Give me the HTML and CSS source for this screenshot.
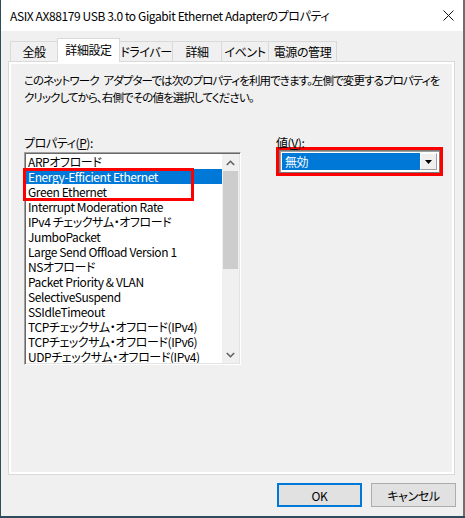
FILE: index.html
```
<!DOCTYPE html>
<html lang="ja">
<head>
<meta charset="utf-8">
<link rel="stylesheet" href="styles.css">
</head>
<body>
<div class="window">
  <div class="titlebar">
    <span class="title">ASIX AX88179 USB 3.0 to Gigabit Ethernet Adapterのプロパティ</span>
    <span class="close"><svg width="11" height="11" viewBox="0 0 11 11"><path d="M0.5 0.5 L10.5 10.5 M10.5 0.5 L0.5 10.5" stroke="#111" stroke-width="1"/></svg></span>
  </div>
  <div class="tabs">
    <div class="tab t1">全般</div>
    <div class="tab t2 selected">詳細設定</div>
    <div class="tab t3">ドライバー</div>
    <div class="tab t4">詳細</div>
    <div class="tab t5">イベント</div>
    <div class="tab t6">電源の管理</div>
  </div>
  <div class="panel">
    <p class="desc">このネットワーク アダプターでは次のプロパティを利用できます。左側で変更するプロパティを<br>クリックしてから、右側でその値を選択してください。</p>
    <div class="cols">
      <div class="leftcol">
        <div class="label">プロパティ(<u>P</u>):</div>
        <div class="listbox">
          <div class="items">
            <div class="item">ARPオフロード</div>
            <div class="item sel">Energy-Efficient Ethernet</div>
            <div class="item">Green Ethernet</div>
            <div class="item">Interrupt Moderation Rate</div>
            <div class="item">IPv4 チェックサム・オフロード</div>
            <div class="item">JumboPacket</div>
            <div class="item">Large Send Offload Version 1</div>
            <div class="item">NSオフロード</div>
            <div class="item">Packet Priority &amp; VLAN</div>
            <div class="item">SelectiveSuspend</div>
            <div class="item">SSIdleTimeout</div>
            <div class="item">TCPチェックサム・オフロード(IPv4)</div>
            <div class="item">TCPチェックサム・オフロード(IPv6)</div>
            <div class="item">UDPチェックサム・オフロード(IPv4)</div>
          </div>
          <div class="scrollbar">
            <div class="sbtn"><svg width="9" height="6" viewBox="0 0 9 6"><path d="M0.8 5 L4.5 1.3 L8.2 5" fill="none" stroke="#606060" stroke-width="1.6"/></svg></div>
            <div class="track"><div class="thumb"></div></div>
            <div class="sbtn"><svg width="9" height="6" viewBox="0 0 9 6"><path d="M0.8 1 L4.5 4.7 L8.2 1" fill="none" stroke="#606060" stroke-width="1.6"/></svg></div>
          </div>
          <div class="mark mark-list"></div>
        </div>
      </div>
      <div class="rightcol">
        <div class="label">値(<u>V</u>):</div>
        <div class="redbox">
          <div class="combo">
            <div class="field">無効</div>
            <div class="dropbtn"><svg width="7" height="4" viewBox="0 0 7 4"><path d="M0 0 H7 L3.5 4 Z" fill="#000"/></svg></div>
          </div>
        </div>
      </div>
    </div>
  </div>
  <div class="buttons">
    <div class="btn default">OK</div>
    <div class="btn">キャンセル</div>
  </div>
</div>
</body>
</html>
```
FILE: styles.css
```
* { box-sizing: border-box; }
html, body { margin: 0; padding: 0; }
body {
  width: 465px;
  height: 518px;
  overflow: hidden;
  background: #2f4c5c;
  font-family: "Noto Sans CJK JP", sans-serif;
  font-feature-settings: "palt";
  font-size: 12px;
  letter-spacing: -0.4px;
  color: #000;
  white-space: nowrap;
}
.window {
  margin-left: 1px;
  width: 464px;
  height: 516px;
  background: #f0f0f0;
  border-right: 2px solid #6e6e6e;
  display: flex;
  flex-direction: column;
}
.titlebar {
  height: 31px;
  background: #fff;
  display: flex;
  align-items: center;
  padding-left: 9px;
}
.title { font-size: 12px; }
.close {
  margin-left: auto;
  width: 30px;
  height: 31px;
  display: flex;
  align-items: center;
  justify-content: center;
}
.tabs {
  margin-top: 7px;
  height: 24px;
  padding-left: 9px;
  display: flex;
  align-items: flex-end;
  margin-bottom: -1px;
}
.tab {
  height: 21px;
  border: 1px solid #d9d9d9;
  border-bottom: none;
  background: #f0f0f0;
  display: flex;
  align-items: center;
  justify-content: center;
  margin-left: -1px;
  line-height: 1;
}
.t1 { margin-left: 0; width: 48px; }
.t2 { width: 63px; }
.t3 { width: 54px; }
.t4 { width: 50px; }
.t5 { width: 48px; }
.t6 { width: 69px; }
.tab.selected {
  height: 24px;
  background: #fff;
  position: relative;
  z-index: 1;
  padding-bottom: 2px;
}
.panel {
  margin-left: 7px;
  width: 447px;
  height: 414px;
  border: 1px solid #d9d9d9;
  box-shadow: inset 2px 2px 0 #fff, inset -2px -2px 0 #fff;
  background: #f0f0f0;
  padding: 10px 0 0 15px;
}
.desc {
  margin: 0;
  font-size: 11.5px;
  line-height: 17px;
  letter-spacing: -0.9px;
  word-spacing: 3px;
}
.cols {
  display: flex;
  margin-top: 28px;
}
.label { line-height: 17px; height: 17px; }
.leftcol { width: 217px; }
.rightcol { margin-left: 35px; }
.listbox {
  position: relative;
  margin-top: 1px;
  width: 217px;
  height: 213px;
  border-top: 1px solid #a0a0a0;
  border-left: 1px solid #a0a0a0;
  border-right: 1px solid #fff;
  border-bottom: 1px solid #fff;
  box-shadow: inset 1px 1px 0 #696969, inset -1px -1px 0 #e3e3e3;
  padding: 1px;
  display: flex;
  background: #fff;
}
.items {
  flex: 1;
  overflow: hidden;
}
.item {
  height: 15px;
  line-height: 15px;
  padding-left: 2px;
  white-space: nowrap;
}
.item.sel { background: #0078d7; color: #fff; }
.scrollbar {
  width: 17px;
  display: flex;
  flex-direction: column;
  background: #f0f0f0;
}
.sbtn {
  height: 17px;
  display: flex;
  align-items: center;
  justify-content: center;
}
.track { flex: 1; padding: 0 1px; }
.thumb { height: 98px; background: #cdcdcd; }
.mark {
  position: absolute;
  border: 3px solid #ff0000;
  pointer-events: none;
}
.mark-list { left: -2px; top: 15px; width: 171px; height: 33px; }
.redbox {
  margin-top: -4px;
  width: 167px;
  height: 29px;
  border: 3px solid #ff0000;
}
.combo {
  width: 161px;
  height: 23px;
  border: 1px solid #7a7a7a;
  box-shadow: inset 1px 1px 0 #a0a0a0;
  padding: 2px;
  background: #fff;
  display: flex;
}
.field {
  flex: 1;
  background: #0078d7;
  color: #fff;
  line-height: 17px;
  padding-left: 3px;
}
.dropbtn {
  width: 17px;
  background: #f0f0f0;
  border-left: 1px solid #fff;
  border-top: 1px solid #fff;
  border-right: 1px solid #a0a0a0;
  border-bottom: 1px solid #a0a0a0;
  display: flex;
  align-items: center;
  justify-content: center;
}
.buttons {
  margin-top: 8px;
  display: flex;
  justify-content: flex-end;
  gap: 9px;
  padding-right: 7px;
}
.btn {
  width: 85px;
  height: 24px;
  background: #e1e1e1;
  border: 1px solid #adadad;
  display: flex;
  align-items: center;
  justify-content: center;
}
.btn.default { border: 2px solid #0078d7; }
```
